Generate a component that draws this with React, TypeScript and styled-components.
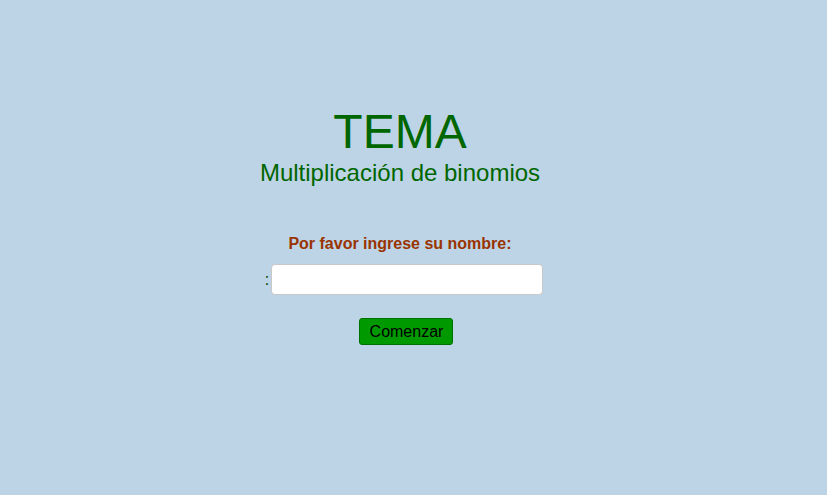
import styled, { createGlobalStyle } from 'styled-components';

const GlobalStyle = createGlobalStyle`
  html, body {
    margin: 0;
    padding: 0;
    background: #bdd3e6;
  }
  body {
    font-family: "Liberation Sans", Arial, sans-serif;
  }
`;

export default function App() {
  return (
    <>
      <GlobalStyle />
      <Page>
        <Header>
          <Title>TEMA</Title>
          <Subtitle>Multiplicación de binomios</Subtitle>
        </Header>
        <Form onSubmit={(e) => e.preventDefault()}>
          <Label htmlFor="nombre">Por favor ingrese su nombre:</Label>
          <InputRow>
            <Colon>:</Colon>
            <NameInput id="nombre" type="text" />
          </InputRow>
          <StartButton type="submit">Comenzar</StartButton>
        </Form>
      </Page>
    </>
  );
}

const Page = styled.div`
  width: 800px;
  min-height: 495px;
  display: flex;
  flex-direction: column;
  align-items: center;
  padding-top: 105px;
  box-sizing: border-box;
`;

const Header = styled.div`
  display: flex;
  flex-direction: column;
  align-items: center;
  color: #006600;
`;

const Title = styled.h1`
  margin: 0;
  font-size: 48px;
  font-weight: 400;
  line-height: 54px;
`;

const Subtitle = styled.h2`
  margin: 0;
  font-size: 24px;
  font-weight: 400;
  line-height: 28px;
`;

const Form = styled.form`
  display: flex;
  flex-direction: column;
  align-items: center;
  margin-top: 47px;
`;

const Label = styled.label`
  color: #993300;
  font-size: 16px;
  font-weight: 700;
  line-height: 20px;
`;

const InputRow = styled.div`
  display: flex;
  align-items: center;
  gap: 2px;
  margin-top: 10px;
  margin-left: 8px;
`;

const Colon = styled.span`
  color: #004400;
  font-size: 16px;
`;

const NameInput = styled.input`
  width: 272px;
  height: 31px;
  box-sizing: border-box;
  border: 1px solid #c8c8c8;
  border-radius: 4px;
  background: #ffffff;
  font-family: inherit;
  font-size: 16px;
  padding: 0 6px;
  outline: none;
`;

const StartButton = styled.button`
  margin-top: 23px;
  margin-left: 13px;
  width: 94px;
  height: 27px;
  box-sizing: border-box;
  background: #009900;
  border: 1px solid #007000;
  border-radius: 3px;
  color: #000000;
  font-family: inherit;
  font-size: 16px;
  padding: 0;
  cursor: pointer;
`;
